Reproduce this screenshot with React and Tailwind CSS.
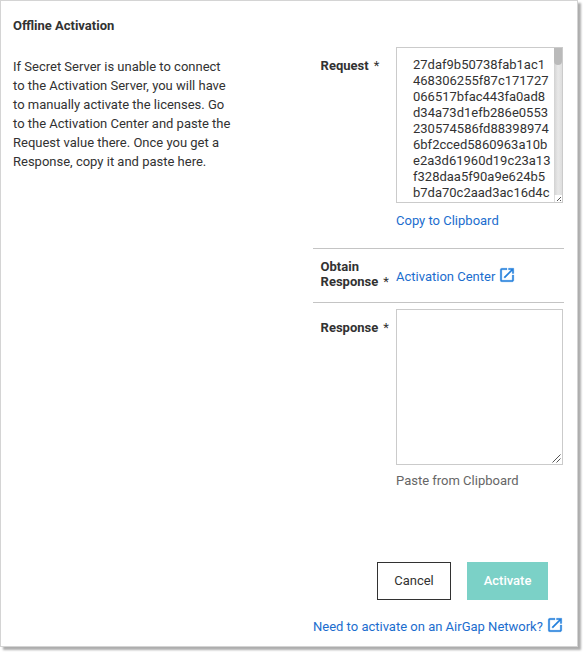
import React from "react";

const intro = [
  "If Secret Server is unable to connect",
  "to the Activation Server, you will have",
  "to manually activate the licenses. Go",
  "to the Activation Center and paste the",
  "Request value there. Once you get a",
  "Response, copy it and paste here.",
];

const requestLines = [
  "27daf9b50738fab1ac1",
  "468306255f87c171727",
  "066517bfac443fa0ad8",
  "d34a73d1efb286e0553",
  "230574586fd88398974",
  "6bf2cced5860963a10b",
  "e2a3d61960d19c23a13",
  "f328daa5f90a9e624b5",
  "b7da70c2aad3ac16d4c",
];

function Label({ children }) {
  return (
    <span className="font-bold leading-[15px]">
      {children}
      <span className="ml-[5px] font-normal">*</span>
    </span>
  );
}

function OpenIcon() {
  return (
    <svg viewBox="0 0 24 24" className="-mt-px size-[18px] shrink-0" fill="#2480dc" stroke="#2480dc" strokeWidth="0.4">
      <path d="M19 19H5V5h7V3H5a2 2 0 0 0-2 2v14a2 2 0 0 0 2 2h14c1.1 0 2-.9 2-2v-7h-2v7zM14 3v2h3.59l-9.83 9.83 1.41 1.41L19 6.41V10h2V3h-7z" />
    </svg>
  );
}

function Grip({ small }) {
  return small ? (
    <svg width="5" height="5" viewBox="0 0 5 5" className="block" fill="#555">
      <path d="M3 0h1v1H3zM2 1h1v1H2zM1 2h1v1H1zM0 3h1v1H0zM3 3h1v1H3z" />
    </svg>
  ) : (
    <svg width="9" height="9" viewBox="0 0 9 9" className="block" stroke="#555" strokeWidth="1">
      <path d="M0.5 8.5L8.5 0.5M4.5 8.5L8.5 4.5" fill="none" />
    </svg>
  );
}

export default function App() {
  return (
    <div className="h-[655px] w-[586px] overflow-hidden bg-white font-['Roboto',sans-serif] text-[13px] text-[#323232]">
      <div className="flex h-[647px] w-[578px] border border-[#d4d4d4] bg-white shadow-[3px_3px_2px_0_rgba(0,0,0,0.32)]">
        <section className="w-[312px] shrink-0 pl-3 pt-[15px]">
          <h1 className="font-bold leading-[19px]">Offline Activation</h1>
          <div className="mt-[22px] whitespace-nowrap leading-[19px]">
            {intro.map((line) => (
              <p key={line}>{line}</p>
            ))}
          </div>
        </section>

        <section className="flex w-[251px] shrink-0 flex-col whitespace-nowrap">
          <div className="flex h-[248px] shrink-0 border-b border-[#c4c4c4] pt-[46px]">
            <div className="w-[83px] shrink-0 pl-[7.6px] pt-[9px]">
              <Label>Request</Label>
            </div>
            <div>
              <div className="flex h-[156px] w-[167px] border border-[#cbcbcb] bg-white">
                <div className="w-[157px] shrink-0 overflow-hidden pl-4 pt-[9px] leading-4">
                  {requestLines.map((line) => (
                    <p key={line}>{line}</p>
                  ))}
                </div>
                <div className="flex w-2 flex-col">
                  <div className="h-[147px] bg-linear-to-r from-[#d2d2d2] via-[#e8e8e8] to-[#dedede]">
                    <div className="h-[17px] rounded-b-[4px] bg-[#bababa]" />
                  </div>
                  <div className="flex h-[7px] items-end justify-end border-l border-[#ddd]">
                    <Grip small />
                  </div>
                </div>
              </div>
              <p className="mt-[8px] leading-[19px] text-[#1b6dce]">Copy to Clipboard</p>
            </div>
          </div>

          <div className="flex h-[54px] shrink-0 border-b border-[#c4c4c4]">
            <div className="w-[83px] shrink-0 pl-[7.6px] pt-[10px] leading-[15px]">
              <p className="font-bold">Obtain</p>
              <p className="leading-[15px]">
                <Label>Response</Label>
              </p>
            </div>
            <div className="flex gap-[3px] pt-[18px] text-[#1b6dce]">
              <span className="leading-[19px]">Activation Center</span>
              <OpenIcon />
            </div>
          </div>

          <div className="flex shrink-0 pt-[6px]">
            <div className="w-[83px] shrink-0 pl-[7.6px] pt-[9px]">
              <Label>Response</Label>
            </div>
            <div>
              <div className="flex h-[156px] w-[167px] items-end justify-end border border-[#cbcbcb] bg-white p-px">
                <Grip />
              </div>
              <p className="mt-[6px] leading-[19px] text-[#666]">Paste from Clipboard</p>
            </div>
          </div>

          <div className="mt-[72px] flex gap-4 pl-[64px]">
            <button className="h-[38px] w-[74px] border border-[#323232] bg-white">Cancel</button>
            <button className="h-[38px] w-[81px] bg-[#7bd1c7] font-medium text-white">Activate</button>
          </div>
          <div className="mt-[17px] flex gap-[3px] text-[#1b6dce]">
            <span className="leading-[19px]">Need to activate on an AirGap Network?</span>
            <OpenIcon />
          </div>
        </section>
      </div>
    </div>
  );
}
